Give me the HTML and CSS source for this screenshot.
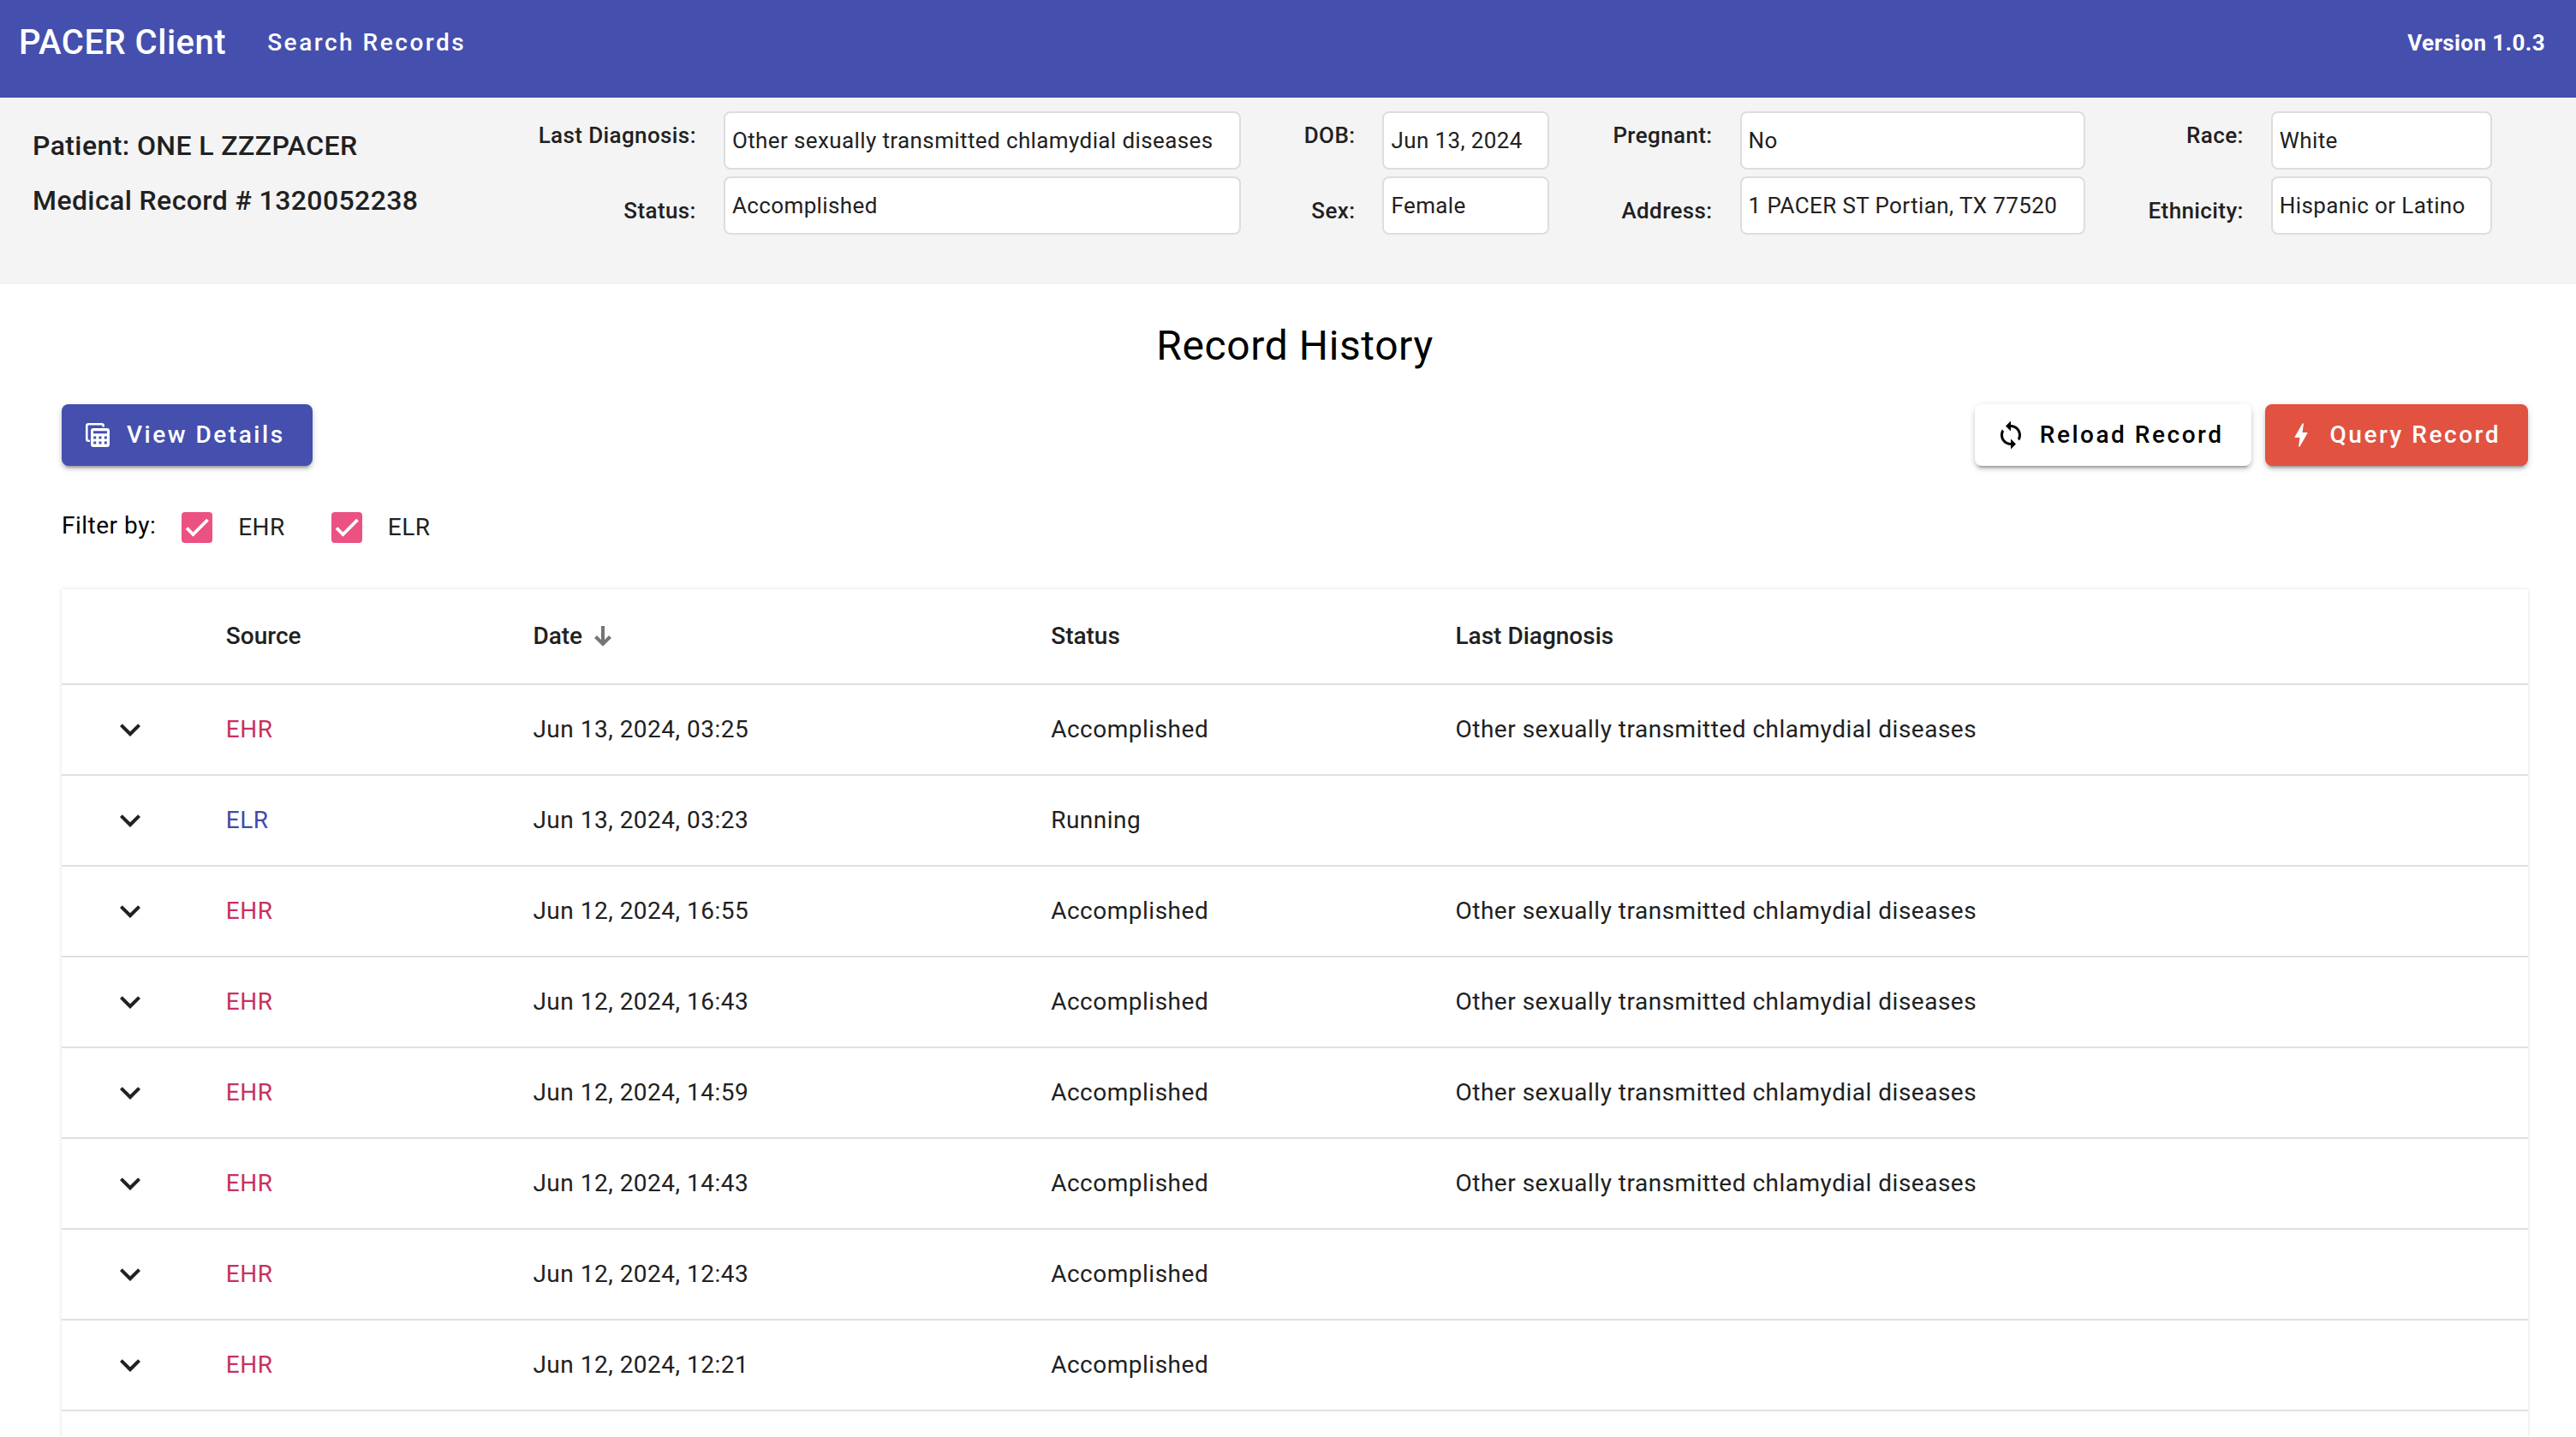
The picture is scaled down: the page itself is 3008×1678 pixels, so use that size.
FILE: index.html
```html
<!DOCTYPE html>
<html lang="en">
<head>
<meta charset="utf-8">
<title>PACER Client</title>
<link rel="stylesheet" href="styles.css">
</head>
<body>
<svg class="sprite" aria-hidden="true">
  <symbol id="chevron" viewBox="0 0 24 24"><path d="M7.41 8.59 12 13.17l4.59-4.58L18 10l-6 6-6-6z"/></symbol>
</svg>

<header class="topbar">
  <span class="brand">PACER Client</span>
  <nav><a class="nav-link" href="#search">Search Records</a></nav>
  <span class="version">Version 1.0.3</span>
</header>

<section class="patient" aria-label="Patient">
  <div class="identity">
    <p>Patient: ONE L ZZZPACER</p>
    <p>Medical Record # 1320052238</p>
  </div>
  <div class="labels"><label for="diagnosis">Last Diagnosis:</label><label for="status">Status:</label></div>
  <div class="fields"><input id="diagnosis" value="Other sexually transmitted chlamydial diseases" readonly><input id="status" value="Accomplished" readonly></div>
  <div class="labels"><label for="dob">DOB:</label><label for="sex">Sex:</label></div>
  <div class="fields"><input id="dob" value="Jun 13, 2024" readonly><input id="sex" value="Female" readonly></div>
  <div class="labels"><label for="pregnant">Pregnant:</label><label for="address">Address:</label></div>
  <div class="fields"><input id="pregnant" value="No" readonly><input id="address" value="1 PACER ST Portian, TX 77520" readonly></div>
  <div class="labels"><label for="race">Race:</label><label for="ethnicity">Ethnicity:</label></div>
  <div class="fields"><input id="race" value="White" readonly><input id="ethnicity" value="Hispanic or Latino" readonly></div>
</section>

<main class="content">
  <h1 class="title">Record History</h1>

  <div class="actions">
    <button class="btn btn-primary" type="button">
      <svg class="icon" viewBox="0 0 36 36" aria-hidden="true"><path fill="none" stroke="currentColor" stroke-width="2.6" d="M9 24.7H7.300Q5.300 24.700 5.300 22.700V7.300Q5.300 5.300 7.300 5.300H22.700Q24.700 5.300 24.700 7.300V8.500"/><path fill-rule="evenodd" d="M13 10H29Q32 10 32 13V29Q32 32 29 32H13Q10 32 10 29V13Q10 10 13 10ZM13 13.300V16.300H29V13.300ZM13.200 19.500V22.500H16.200V19.500ZM19.500 19.500V22.500H22.500V19.500ZM25.800 19.500V22.500H28.800V19.500ZM13.200 25.500V28.500H16.200V25.500ZM19.500 25.500V28.500H22.500V25.500ZM25.800 25.500V28.500H28.800V25.500Z"/></svg>
      View Details
    </button>
    <div class="actions-end">
      <button class="btn" type="button">
        <svg class="icon" viewBox="0 0 24 24" aria-hidden="true"><path d="M12 4V1L8 5l4 4V6c3.310 0 6 2.690 6 6 0 1.010-.25 1.970-.7 2.800l1.460 1.460C19.540 15.030 20 13.570 20 12c0-4.420-3.580-8-8-8zm0 14c-3.310 0-6-2.690-6-6 0-1.010.25-1.970.7-2.800L5.240 7.740C4.460 8.970 4 10.430 4 12c0 4.420 3.580 8 8 8v3l4-4-4-4v3z"/></svg>
        Reload Record
      </button>
      <button class="btn btn-warn" type="button">
        <svg class="icon" viewBox="0 0 24 24" aria-hidden="true"><path d="M11 21h-1l1-7H7.500c-.58 0-.57-.32-.38-.66.19-.34.05-.08.07-.12C8.480 10.940 10.420 7.540 13 3h1l-1 7h3.500c.49 0 .56.33.47.51l-.07.15C12.960 17.550 11 21 11 21z"/></svg>
        Query Record
      </button>
    </div>
  </div>

  <div class="filters" role="group" aria-labelledby="filter-title">
    <span class="filter-title" id="filter-title">Filter by:</span>
    <span class="check"><input type="checkbox" id="ehr" checked><label for="ehr">EHR</label></span>
    <span class="check"><input type="checkbox" id="elr" checked><label for="elr">ELR</label></span>
  </div>

  <div class="card">
    <table class="records">
      <colgroup><col class="col-toggle"><col class="col-source"><col class="col-date"><col class="col-status"><col></colgroup>
      <thead>
        <tr>
          <td></td>
          <th scope="col">Source</th>
          <th scope="col" aria-sort="descending"><button class="sort" type="button">Date <svg class="sort-icon" viewBox="0 0 24 24" aria-hidden="true"><path fill="none" stroke="currentColor" stroke-width="4" d="M12 0V22M3.500 12.500 12 21 20.500 12.500"/></svg></button></th>
          <th scope="col">Status</th>
          <th scope="col">Last Diagnosis</th>
        </tr>
      </thead>
      <tbody>
        <tr><td><button class="toggle" type="button" aria-label="Expand"><svg class="chevron"><use href="#chevron"/></svg></button></td><td class="ehr">EHR</td><td>Jun 13, 2024, 03:25</td><td>Accomplished</td><td>Other sexually transmitted chlamydial diseases</td></tr>
        <tr><td><button class="toggle" type="button" aria-label="Expand"><svg class="chevron"><use href="#chevron"/></svg></button></td><td class="elr">ELR</td><td>Jun 13, 2024, 03:23</td><td>Running</td><td></td></tr>
        <tr><td><button class="toggle" type="button" aria-label="Expand"><svg class="chevron"><use href="#chevron"/></svg></button></td><td class="ehr">EHR</td><td>Jun 12, 2024, 16:55</td><td>Accomplished</td><td>Other sexually transmitted chlamydial diseases</td></tr>
        <tr><td><button class="toggle" type="button" aria-label="Expand"><svg class="chevron"><use href="#chevron"/></svg></button></td><td class="ehr">EHR</td><td>Jun 12, 2024, 16:43</td><td>Accomplished</td><td>Other sexually transmitted chlamydial diseases</td></tr>
        <tr><td><button class="toggle" type="button" aria-label="Expand"><svg class="chevron"><use href="#chevron"/></svg></button></td><td class="ehr">EHR</td><td>Jun 12, 2024, 14:59</td><td>Accomplished</td><td>Other sexually transmitted chlamydial diseases</td></tr>
        <tr><td><button class="toggle" type="button" aria-label="Expand"><svg class="chevron"><use href="#chevron"/></svg></button></td><td class="ehr">EHR</td><td>Jun 12, 2024, 14:43</td><td>Accomplished</td><td>Other sexually transmitted chlamydial diseases</td></tr>
        <tr><td><button class="toggle" type="button" aria-label="Expand"><svg class="chevron"><use href="#chevron"/></svg></button></td><td class="ehr">EHR</td><td>Jun 12, 2024, 12:43</td><td>Accomplished</td><td></td></tr>
        <tr><td><button class="toggle" type="button" aria-label="Expand"><svg class="chevron"><use href="#chevron"/></svg></button></td><td class="ehr">EHR</td><td>Jun 12, 2024, 12:21</td><td>Accomplished</td><td></td></tr>
      </tbody>
    </table>
  </div>
</main>
</body>
</html>
```

FILE: styles.css
```css
* {
  box-sizing: border-box;
}

body {
  margin: 0;
  min-height: 100vh;
  display: flex;
  flex-direction: column;
  background: #fff;
  color: #000;
  font: 400 28px/32px Roboto, sans-serif;
}

button,
input {
  font: inherit;
  color: inherit;
}

.sprite {
  display: none;
}

/* Top bar */
.topbar {
  display: flex;
  align-items: center;
  gap: 48px;
  padding: 26px 36px 40px 22px;
  background: #454fae;
  color: #fff;
}

.brand {
  font-size: 40px;
  font-weight: 500;
  line-height: 48px;
  letter-spacing: 0.0125em;
}

.nav-link {
  color: inherit;
  font-weight: 500;
  letter-spacing: 0.09em;
  text-decoration: none;
}

.version {
  margin-left: auto;
  font-size: 26px;
  font-weight: 700;
  letter-spacing: 0.015em;
}

/* Patient summary */
.patient {
  display: grid;
  grid-template-columns: 556fr auto 601fr auto 194fr auto 401fr auto 257fr;
  column-gap: 32px;
  padding: 16px 98px 58px 38px;
  background: #f4f4f4;
  color: #212121;
  font-size: 26px;
  letter-spacing: 0.015em;
}

.identity {
  display: flex;
  flex-direction: column;
  gap: 24px;
  padding-top: 20px;
  font-size: 32px;
  font-weight: 500;
  line-height: 40px;
  letter-spacing: 0.0125em;
  white-space: nowrap;
}

.identity p {
  margin: 0;
}

.labels {
  display: flex;
  flex-direction: column;
  gap: 56px;
  padding-top: 12px;
  font-weight: 500;
  text-align: right;
  white-space: nowrap;
}

.fields + .labels {
  margin-left: 42px;
}

.fields {
  display: flex;
  flex-direction: column;
  gap: 8px;
  min-width: 0;
}

.fields input {
  width: 100%;
  height: 68px;
  padding: 0 8px;
  border: 2px solid #ddd;
  border-radius: 8px;
  background: #fff;
  letter-spacing: inherit;
}

/* Main content */
.content {
  flex: 1;
  display: flex;
  flex-direction: column;
  padding: 44px 56px 0 72px;
}

.title {
  margin: 0 0 40px;
  font-size: 48px;
  font-weight: 400;
  line-height: 56px;
  letter-spacing: 0.0125em;
  text-align: center;
}

.actions {
  display: flex;
  justify-content: space-between;
}

.actions-end {
  display: flex;
  gap: 16px;
}

.btn {
  display: flex;
  align-items: center;
  gap: 16px;
  height: 72px;
  padding: 0 32px 0 24px;
  border: 0;
  border-radius: 8px;
  background: #fff;
  box-shadow: 0 6px 2px -4px rgba(0, 0, 0, 0.2), 0 4px 4px rgba(0, 0, 0, 0.14), 0 2px 10px rgba(0, 0, 0, 0.12);
  font-weight: 500;
  letter-spacing: 0.09em;
}

.btn-primary {
  background: #454fae;
  color: #fff;
}

.btn-warn {
  background: #e15241;
  color: #fff;
}

.icon {
  width: 36px;
  height: 36px;
  fill: currentColor;
}

/* Source filters */
.filters {
  display: flex;
  align-items: center;
  gap: 54px;
  margin: 54px 0;
  letter-spacing: 0.018em;
}

.filter-title {
  padding-bottom: 4px;
  margin-right: -24px;
}

.check {
  display: flex;
  align-items: center;
  gap: 30px;
  color: #212121;
}

.check input {
  appearance: none;
  width: 36px;
  height: 36px;
  margin: 0;
  border: 4px solid #757575;
  border-radius: 4px;
}

.check input:checked {
  border: 0;
  background: #eb5181 url("data:image/svg+xml,%3Csvg xmlns='http://www.w3.org/2000/svg' viewBox='0 0 36 36'%3E%3Cpath d='M6 18.500l7.500 7.500L30.500 9' fill='none' stroke='white' stroke-width='3.800'/%3E%3C/svg%3E");
}

/* Records table */
.card {
  flex: 1;
  background: #fff;
  box-shadow: 0 4px 2px -2px rgba(0, 0, 0, 0.1), 0 0 4px rgba(0, 0, 0, 0.14);
}

.records {
  width: 100%;
  border-collapse: separate;
  border-spacing: 0;
  table-layout: fixed;
  color: #212121;
}

.col-toggle {
  width: 5.55%;
}

.col-source {
  width: 12.45%;
}

.col-date {
  width: 21%;
}

.col-status {
  width: 16.4%;
}

.records th,
.records td {
  height: 106px;
  padding: 0 32px;
  border-bottom: 2px solid #e0e0e0;
  text-align: left;
}

.records td {
  letter-spacing: 0.018em;
}

.records th {
  font-weight: 500;
}

.records thead th,
.records thead td {
  height: 112px;
}

.records .ehr {
  color: #c9305f;
}

.records .elr {
  color: #3f4bab;
}

.sort,
.toggle {
  display: flex;
  align-items: center;
  padding: 0;
  border: 0;
  background: none;
}

.sort {
  gap: 12px;
}

.sort-icon {
  width: 24px;
  height: 24px;
  color: #757575;
}

.toggle {
  justify-content: center;
  width: 96px;
  height: 48px;
}

.chevron {
  width: 48px;
  height: 48px;
  fill: currentColor;
}
```
